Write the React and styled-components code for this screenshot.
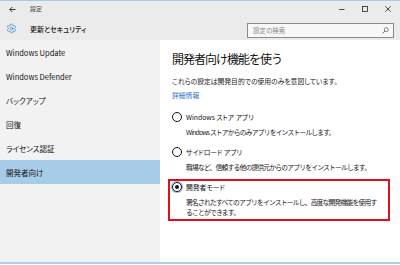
import React from "react";
import styled, { createGlobalStyle } from "styled-components";
import { Settings } from "lucide-react";

const Global = createGlobalStyle`
  html, body { margin: 0; padding: 0; background: #fff; overflow: hidden; }
  * { box-sizing: border-box; }
`;

const FONT = `"Noto Sans CJK JP", "Noto Sans", sans-serif`;

const Window = styled.div`
  width: 400px;
  height: 265px;
  display: flex;
  flex-direction: column;
  font-family: ${FONT};
  font-feature-settings: "palt";
  color: #111;
  background: #fff;
  border-top: 1px solid #a3cbea;
`;

const Header = styled.div`
  background: #ebebeb;
  height: 39px;
  display: flex;
  flex-direction: column;
`;

const TitleBar = styled.div`
  height: 16px;
  display: flex;
  align-items: center;
  padding-left: 9px;
`;

const BackArrow = styled.svg`
  width: 7px;
  height: 7px;
  margin-right: 14px;
`;

const AppTitle = styled.span`
  font-size: 6px;
  line-height: 8px;
  color: #444;
`;

const Controls = styled.div`
  margin-left: auto;
  display: flex;
  align-items: center;
  gap: 17px;
  padding-right: 9px;
`;

const ControlIcon = styled.svg`
  width: 6px;
  height: 6px;
  display: block;
`;

const SectionRow = styled.div`
  flex: 1;
  display: flex;
  align-items: center;
  padding-left: 6px;
  padding-right: 6px;
`;

const SectionTitle = styled.span`
  font-size: 7px;
  line-height: 10px;
  font-weight: 500;
  margin-left: 13px;
  color: #111;
`;

const Search = styled.div`
  margin-left: auto;
  width: 147px;
  height: 15px;
  border: 1px solid #8a8a8a;
  background: #f7f7f7;
  display: flex;
  align-items: center;
  padding: 0 4px 0 5px;
  margin-top: 3px;
`;

const Placeholder = styled.span`
  font-size: 6.5px;
  line-height: 8px;
  color: #8a8a8a;
  flex: 1;
`;

const Body = styled.div`
  flex: 1;
  display: flex;
  min-height: 0;
`;

const Sidebar = styled.nav`
  width: 160px;
  background: #f2f2f2;
  display: flex;
  flex-direction: column;
`;

const NavItem = styled.div`
  height: 24px;
  display: flex;
  align-items: center;
  padding-left: 6px;
  font-size: 7.5px;
  color: #111;
  background: ${(p) => (p.$active ? "#a6cce8" : "transparent")};
`;

const Content = styled.main`
  flex: 1;
  padding: 11px 10px 0 12px;
  display: flex;
  flex-direction: column;
`;

const PageTitle = styled.h1`
  margin: 0;
  font-size: 12px;
  line-height: 16px;
  font-weight: 400;
  letter-spacing: -1px;
  font-feature-settings: normal;
  color: #111;
`;

const Para = styled.p`
  margin: 9px 0 0;
  font-size: 6.8px;
  line-height: 10px;
  color: #222;
`;

const Link = styled.a`
  margin-top: 4px;
  font-size: 6.8px;
  line-height: 10px;
  color: #2d74c4;
  text-decoration: none;
`;

const Options = styled.div`
  margin-top: 9px;
  display: flex;
  flex-direction: column;
  gap: 3px;
`;

const Option = styled.div`
  margin-left: -4px;
  border: 2px solid ${(p) => (p.$highlight ? "#e0101a" : "transparent")};
  padding: 0 0 2px 2px;
  display: flex;
  flex-direction: column;
`;

const OptionHead = styled.div`
  display: flex;
  align-items: center;
  height: 12px;
`;

const Radio = styled.span`
  width: 10px;
  height: 10px;
  border-radius: 50%;
  border: 1.3px solid #111;
  display: flex;
  align-items: center;
  justify-content: center;
  margin-right: 4px;
  box-shadow: ${(p) => (p.$checked ? "0 0 0 1px #7fb5e6" : "none")};
  &::after {
    content: "";
    width: 4.5px;
    height: 4.5px;
    border-radius: 50%;
    background: ${(p) => (p.$checked ? "#111" : "transparent")};
  }
`;

const OptionLabel = styled.span`
  font-size: 6.8px;
  line-height: 12px;
  color: #111;
`;

const OptionDesc = styled.div`
  margin-top: 4px;
  padding-left: 14px;
  font-size: 6.8px;
  line-height: 10px;
  letter-spacing: -0.82px;
  font-feature-settings: normal;
  white-space: pre-line;
  color: #222;
`;

const BottomLine = styled.div`
  height: 2px;
  background: #a9d1ef;
  margin-bottom: 1px;
`;

const navItems = [
  "Windows Update",
  "Windows Defender",
  "バックアップ",
  "回復",
  "ライセンス認証",
  "開発者向け",
];

const options = [
  {
    label: "Windows ストア アプリ",
    desc: "Windows ストアからのみアプリをインストールします。",
  },
  {
    label: "サイドロード アプリ",
    desc: "職場など、信頼する他の提供元からのアプリをインストールします。",
  },
  {
    label: "開発者モード",
    desc: "署名されたすべてのアプリをインストールし、高度な開発機能を使用す\nることができます。",
    checked: true,
  },
];

export default function App() {
  return (
    <>
      <Global />
      <Window>
        <Header>
          <TitleBar>
            <BackArrow viewBox="0 0 7 7">
              <path d="M6.5 3.5H0.8M3.3 1L0.8 3.5L3.3 6" fill="none" stroke="#222" strokeWidth="0.9" />
            </BackArrow>
            <AppTitle>設定</AppTitle>
            <Controls>
              <ControlIcon viewBox="0 0 6 6">
                <path d="M0 3.5H5.5" stroke="#222" strokeWidth="0.8" />
              </ControlIcon>
              <ControlIcon viewBox="0 0 6 6">
                <rect x="0.5" y="0.5" width="5" height="5" fill="none" stroke="#222" strokeWidth="0.8" />
              </ControlIcon>
              <ControlIcon viewBox="0 0 6 6">
                <path d="M0.3 0.3L5.7 5.7M5.7 0.3L0.3 5.7" stroke="#222" strokeWidth="0.8" />
              </ControlIcon>
            </Controls>
          </TitleBar>
          <SectionRow>
            <Settings size={11} color="#2f7ccc" strokeWidth={1.4} />
            <SectionTitle>更新とセキュリティ</SectionTitle>
            <Search>
              <Placeholder>設定の検索</Placeholder>
              <svg width="7" height="7" viewBox="0 0 7 7">
                <circle cx="4.3" cy="2.7" r="2" fill="none" stroke="#555" strokeWidth="0.7" />
                <path d="M2.9 4.1L0.6 6.4" stroke="#555" strokeWidth="0.8" />
              </svg>
            </Search>
          </SectionRow>
        </Header>
        <Body>
          <Sidebar>
            {navItems.map((n) => (
              <NavItem key={n} $active={n === "開発者向け"}>
                {n}
              </NavItem>
            ))}
          </Sidebar>
          <Content>
            <PageTitle>開発者向け機能を使う</PageTitle>
            <Para>これらの設定は開発目的での使用のみを意図しています。</Para>
            <Link href="#">詳細情報</Link>
            <Options>
              {options.map((o) => (
                <Option key={o.label} $highlight={o.checked}>
                  <OptionHead>
                    <Radio $checked={o.checked} />
                    <OptionLabel>{o.label}</OptionLabel>
                  </OptionHead>
                  <OptionDesc>{o.desc}</OptionDesc>
                </Option>
              ))}
            </Options>
          </Content>
        </Body>
        <BottomLine />
      </Window>
    </>
  );
}
